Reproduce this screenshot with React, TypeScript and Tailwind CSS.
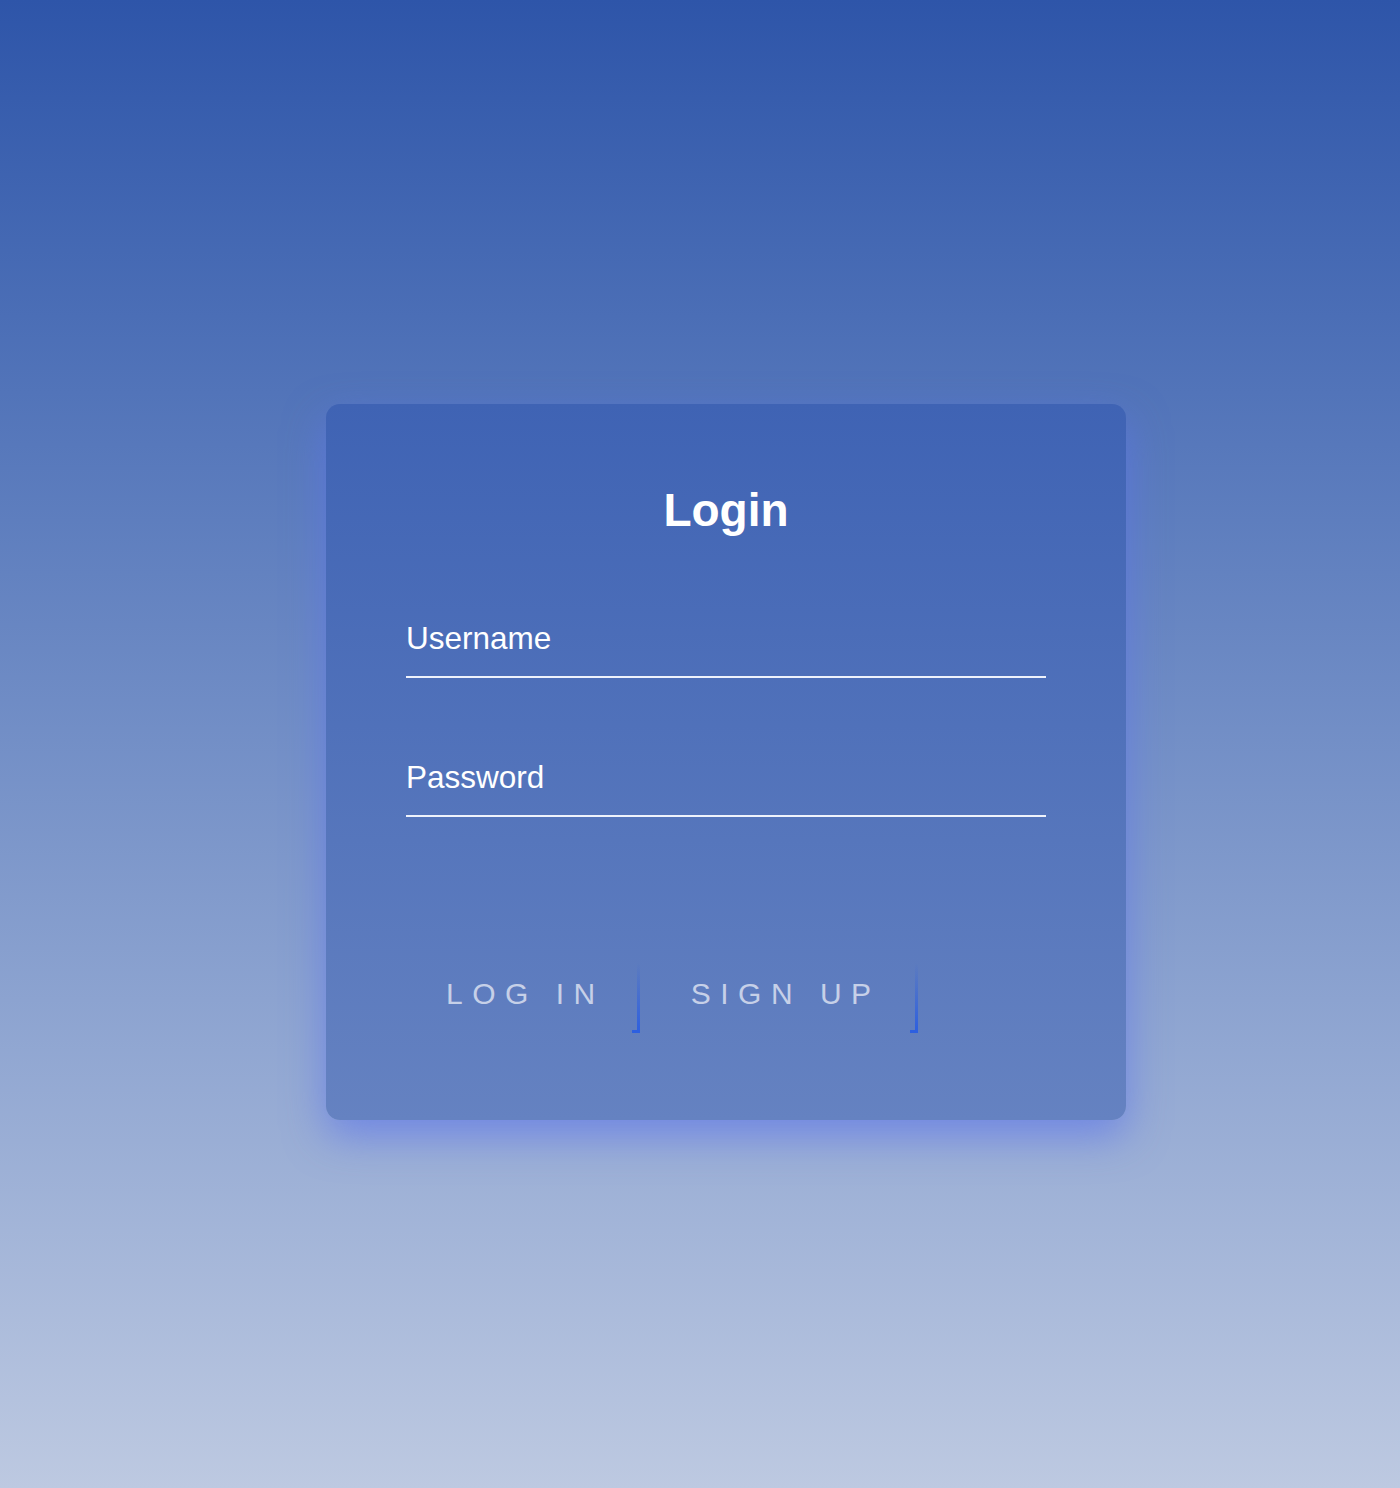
import React from "react";

const Field = ({ label, type }: { label: string; type: string }) => (
  <label className="block border-b-2 border-[#eef2fc] pb-[20px]">
    <span className="block text-[31.5px] leading-[36px] text-white">{label}</span>
    <input type={type} className="sr-only" aria-label={label} />
  </label>
);

const Bracket = () => (
  <span className="pointer-events-none absolute bottom-0 right-0 h-full w-[8px]">
    <span className="absolute bottom-0 right-0 h-full w-[3px] bg-gradient-to-b from-transparent to-[#2d5fe0]" />
    <span className="absolute bottom-0 right-0 h-[3px] w-full bg-[#2d5fe0]" />
  </span>
);

export default function App() {
  return (
    <div
      className="min-h-[1488px] w-full bg-gradient-to-b from-[#2e55a9] to-[#bdc9e1] pt-[404px]"
      style={{ fontFamily: '"Liberation Sans", Arial, sans-serif' }}
    >
      <div className="ml-[326px] h-[716px] w-[800px] rounded-[14px] bg-gradient-to-b from-[#3f63b4] to-[#6582c1] px-[80px] pt-[80px] shadow-[0_16px_40px_rgba(90,115,235,0.65)]">
        <h1 className="text-center text-[46px] font-bold leading-[52px] text-white">Login</h1>

        <div className="mt-[84px]">
          <Field label="Username" type="text" />
        </div>
        <div className="mt-[81px]">
          <Field label="Password" type="password" />
        </div>

        <div className="mt-[146px] flex items-start">
          <button className="relative pl-[40px] pr-[35px] pt-[15px] pb-[23px] text-left">
            <span className="block text-[30px] leading-[32px] tracking-[9.5px] text-[#c6d0e8]">LOG IN</span>
            <Bracket />
          </button>
          <button className="relative ml-[10px] pl-[41px] pr-[37px] pt-[15px] pb-[23px] text-left">
            <span className="block text-[30px] leading-[32px] tracking-[9.5px] text-[#c6d0e8]">SIGN UP</span>
            <Bracket />
          </button>
        </div>
      </div>
    </div>
  );
}
